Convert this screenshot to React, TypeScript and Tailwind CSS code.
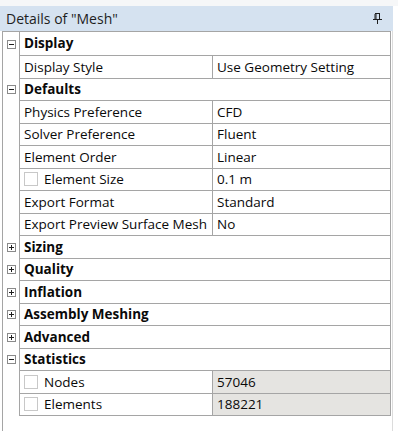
type Row = { label: string; value: string; check?: boolean; stat?: boolean };
type Section = { title: string; open: boolean; rows: Row[] };

const SECTIONS: Section[] = [
  { title: 'Display', open: true, rows: [{ label: 'Display Style', value: 'Use Geometry Setting' }] },
  {
    title: 'Defaults',
    open: true,
    rows: [
      { label: 'Physics Preference', value: 'CFD' },
      { label: 'Solver Preference', value: 'Fluent' },
      { label: 'Element Order', value: 'Linear' },
      { label: 'Element Size', value: '0.1 m', check: true },
      { label: 'Export Format', value: 'Standard' },
      { label: 'Export Preview Surface Mesh', value: 'No' },
    ],
  },
  { title: 'Sizing', open: false, rows: [] },
  { title: 'Quality', open: false, rows: [] },
  { title: 'Inflation', open: false, rows: [] },
  { title: 'Assembly Meshing', open: false, rows: [] },
  { title: 'Advanced', open: false, rows: [] },
  {
    title: 'Statistics',
    open: true,
    rows: [
      { label: 'Nodes', value: '57046', check: true, stat: true },
      { label: 'Elements', value: '188221', check: true, stat: true },
    ],
  },
];

function ExpandBox({ open }: { open: boolean }) {
  return (
    <div className="relative h-[9px] w-[9px] border border-[#8a8a8a] bg-white">
      <div className="absolute left-[1px] top-[3px] h-px w-[5px] bg-[#1e1e1e]" />
      {!open && <div className="absolute left-[3px] top-[1px] h-[5px] w-px bg-[#1e1e1e]" />}
    </div>
  );
}

function PinIcon() {
  return (
    <svg width="9" height="11" viewBox="0 0 9 11" className="block">
      <path d="M2 0.5H7M2 1V6.5M6.5 0.5V6.5M0 6.5H9M4.5 6.5V11" stroke="#1e1e1e" strokeWidth="1" fill="none" />
      <path d="M3 1V6" stroke="#1e1e1e" strokeWidth="1" />
    </svg>
  );
}

function CheckBox() {
  return <div className="mr-[6px] h-[14px] w-[14px] shrink-0 border border-[#c8c8c8] bg-white" />;
}

export default function App() {
  let first = true;
  const rows: React.ReactNode[] = [];

  SECTIONS.forEach((section) => {
    const h = first ? 'h-[24px]' : 'h-[22.5px]';
    first = false;
    rows.push(
      <div key={section.title} className={`flex ${h}`}>
        <div className="flex w-[16px] items-center justify-center pl-[1px]">
          <ExpandBox open={section.open} />
        </div>
        <div className="flex flex-1 items-center border-b border-l border-r border-[#a5a5a5] pl-[4px] font-bold">
          {section.title}
        </div>
      </div>
    );
    if (section.open) {
      section.rows.forEach((row) => {
        rows.push(
          <div key={row.label} className="flex h-[22.5px]">
            <div className="w-[16px]" />
            <div className="flex flex-1 border-b border-l border-r border-[#a5a5a5]">
              <div className="flex w-[193px] items-center border-r border-[#a5a5a5] pl-[4px]">
                {row.check && <CheckBox />}
                <span className="whitespace-nowrap">{row.label}</span>
              </div>
              <div className={`flex flex-1 items-center pl-[4px] ${row.stat ? 'bg-[#e5e4e1]' : ''}`}>
                {row.value}
              </div>
            </div>
          </div>
        );
      });
    }
  });

  return (
    <div
      className="flex h-[431px] w-[398px] flex-col bg-white text-[13.5px] text-[#0a0a0a]"
      style={{ fontFamily: '"Open Sans", "Noto Sans", sans-serif' }}
    >
      <div className="h-[6px] bg-[#f6f7f8]" />
      <div className="flex h-[25px] w-[393px] items-center justify-between bg-[#d5e2f0] pl-[6px] pr-[11px] text-[14px] text-[#1e1e1e]">
        <span>Details of "Mesh"</span>
        <PinIcon />
      </div>
      <div className="ml-[2px] flex w-[391px] flex-1 flex-col border-l border-r border-l-[#a5a5a5] border-r-[#dcdcdc] pr-px">
        <div className="border-t border-[#a5a5a5]">{rows}</div>
      </div>
    </div>
  );
}
